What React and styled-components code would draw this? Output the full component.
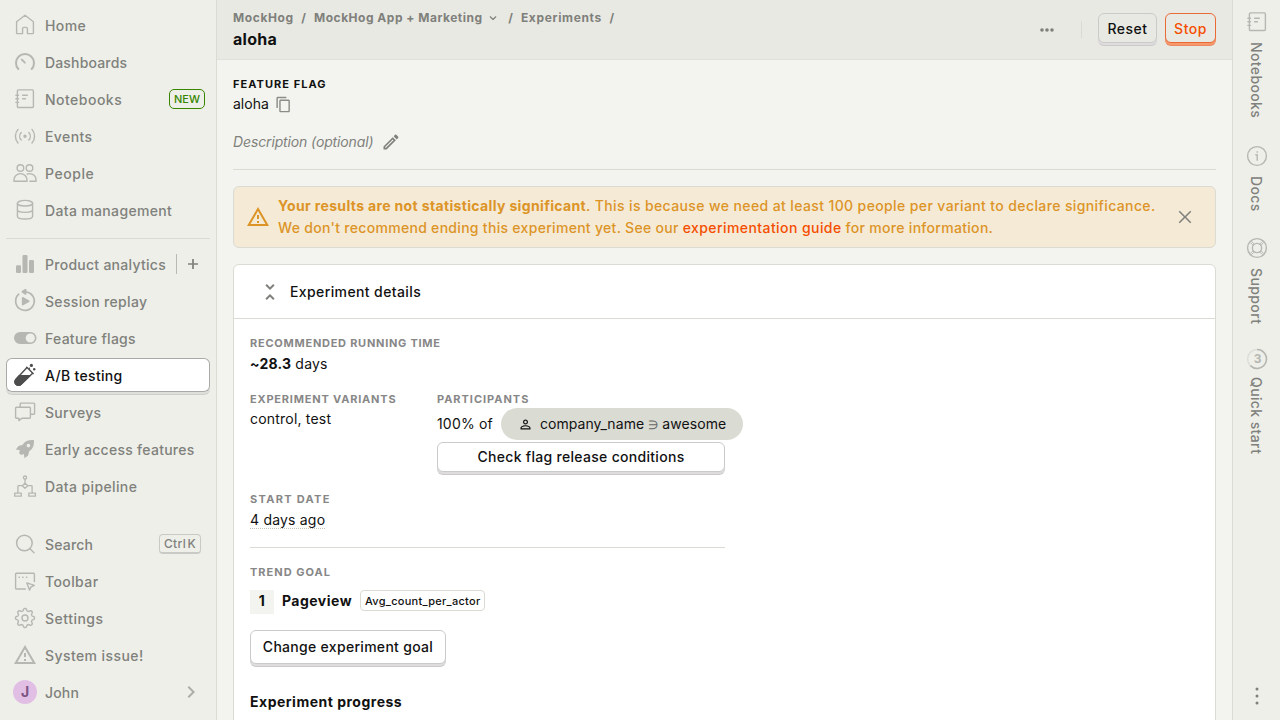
import React from "react";
import styled, { createGlobalStyle, css } from "styled-components";

const GlobalStyle = createGlobalStyle`
  * { box-sizing: border-box; }
  body {
    margin: 0;
    overflow: hidden;
    background: #f3f4ef;
    color: #111;
    font-family: Inter, "Liberation Sans", sans-serif;
    font-size: 14px;
    line-height: 20px;
  }
  svg { display: block; flex: none; }
`;

const Shell = styled.div`
  display: flex;
  height: 720px;
  width: 1280px;
  overflow: hidden;
`;

/* Left navigation */
const Sidebar = styled.nav`
  width: 217px;
  flex: none;
  display: flex;
  flex-direction: column;
  justify-content: space-between;
  padding: 8px 6px 11px;
  background: #eeefe9;
  border-right: 1px solid #dadbd2;
`;
const NavGroup = styled.ul`
  list-style: none;
  margin: 0;
  padding: 0;
  display: flex;
  flex-direction: column;
  gap: 3px;
`;
const NavDivider = styled.hr`
  border: 0;
  height: 1px;
  margin: 11px 0 8px;
  background: #dadbd2;
`;
const NavItem = styled.li`
  height: 34px;
  display: flex;
  align-items: center;
  gap: 8px;
  padding: 0 7px;
  border-radius: 6px;
  font-weight: 500;
  color: #80817c;
  ${(p) =>
    p.$active &&
    css`
      background: #fff;
      color: #111;
      box-shadow: inset 0 0 0 1px #a9a9a7, 0 2px 0 #dededb, 0 3px 0 #cfcfcc;
    `}
`;
const NavIcon = styled.span`
  width: 24px;
  height: 24px;
  color: ${(p) => (p.$active ? "#4d4d4d" : "#b6b7b2")};
`;
const NavLabel = styled.span`
  flex: 1;
  white-space: nowrap;
  padding-top: 1px;
  letter-spacing: ${(p) => p.$track || 0.27}px;
`;
const NewTag = styled.span`
  margin-right: -2px;
  height: 20px;
  padding: 0 4px;
  border: 1px solid #388600;
  border-radius: 5px;
  color: #388600;
  font-size: 11px;
  line-height: 18px;
`;
const AddAction = styled.span`
  display: flex;
  align-items: center;
  height: 20px;
  padding-left: 8px;
  margin-right: 2px;
  border-left: 1px solid #b9bab5;
  color: #80817c;
`;
const Shortcut = styled.kbd`
  height: 20px;
  margin-right: 2px;
  padding: 0 4px;
  border: 1px solid #c9cac6;
  border-bottom-width: 2px;
  border-radius: 4px;
  font: 500 12px/17px Inter, "Liberation Sans", sans-serif;
  letter-spacing: 0.35px;
  word-spacing: -2.2px;
`;
const Avatar = styled.span`
  display: flex;
  align-items: center;
  justify-content: center;
  width: 24px;
  height: 24px;
  border-radius: 50%;
  background: #e1bfe5;
  color: #7b5582;
  font-size: 14px;
  font-weight: 700;
`;

/* Centre */
const Main = styled.main`
  flex: 1;
  min-width: 0;
  display: flex;
  flex-direction: column;
`;
const TopBar = styled.header`
  height: 60px;
  flex: none;
  display: flex;
  justify-content: space-between;
  padding: 0 16px;
  background: #e8e9e3;
  border-bottom: 1px solid #e0e1da;
`;
const Breadcrumbs = styled.div`
  display: flex;
  align-items: center;
  margin-top: 9px;
  height: 17px;
  font-size: 12px;
  font-weight: 700;
  line-height: 17px;
  letter-spacing: 0.52px;
  color: #7f807b;
  svg { margin: 1px 2px 0 4px; }
`;
const Crumb = styled.span`
  white-space: nowrap;
  letter-spacing: ${(p) => p.$track || 0.55}px;
`;
const Slash = styled.span`
  margin: 0 7.6px;
`;
const PageTitle = styled.h1`
  margin: 1px 0 0;
  font-size: 16px;
  line-height: 24px;
  font-weight: 700;
  letter-spacing: 0.3px;
`;
const Actions = styled.div`
  display: flex;
  align-items: flex-start;
  padding-top: 13px;
`;
const MoreButton = styled.span`
  display: flex;
  margin: 5px 22px 0 0;
  color: #7f807b;
`;
const ActionDivider = styled.span`
  width: 1px;
  height: 17px;
  margin: 8px 16px 0 0;
  background: #d9dad2;
`;
const Button = styled.button`
  display: flex;
  align-items: center;
  justify-content: center;
  height: ${(p) => (p.$large ? 34 : 30)}px;
  width: ${(p) => p.$width || "auto"};
  padding: ${(p) => (p.$onBar ? "2px 0 0" : 0)};
  border: 1px solid ${(p) => (p.$danger ? "#ea6a35" : "#cbcacb")};
  border-radius: 6px;
  background: ${(p) => (p.$onBar ? "#e8e9e3" : "#fff")};
  box-shadow: ${(p) =>
    p.$danger
      ? "0 2px 0 #f6976c, 0 3px 0 #ea8a60"
      : "0 2px 0 #dfdcdd, 0 3px 0 #cbcacb"};
  color: ${(p) => (p.$danger ? "#f54e00" : "#111")};
  font: 500 14px/20px Inter, "Liberation Sans", sans-serif;
  letter-spacing: ${(p) => (p.$onBar ? 0.5 : 0.3)}px;
  & + & { margin-left: 8px; }
`;

const Content = styled.div`
  flex: 1;
  min-height: 0;
  overflow: hidden;
  padding: 16px 16px 0;
`;
const Label = styled.div`
  height: 16px;
  font-size: 11px;
  line-height: 16px;
  font-weight: 700;
  letter-spacing: ${(p) => p.$track || 0.8}px;
  text-transform: uppercase;
  white-space: nowrap;
  color: ${(p) => (p.$strong ? "#111" : "#878787")};
`;
const InlineRow = styled.div`
  display: flex;
  align-items: center;
  height: 20px;
  gap: ${(p) => p.$gap || 0}px;
  margin-top: ${(p) => p.$top || 0}px;
  color: ${(p) => (p.$muted ? "#80817c" : "#111")};
`;
const Placeholder = styled.i`
  color: #80817c;
  letter-spacing: -0.13px;
`;
const Rule = styled.hr`
  border: 0;
  height: 1px;
  margin: ${(p) => p.$margin};
  background: #dadbd2;
`;
const Banner = styled.div`
  display: flex;
  align-items: center;
  height: 62px;
  padding: 0 18px 0 12px;
  border: 1px solid #dadbd2;
  border-radius: 6px;
  background: #f4ead6;
  color: #dd9426;
  font-weight: 500;
  line-height: 22px;
`;
const BannerText = styled.div`
  flex: 1;
  margin-left: 8px;
  white-space: nowrap;
`;
const BannerLine = styled.p`
  margin: 0;
  letter-spacing: ${(p) => p.$track}px;
  strong { font-weight: 700; letter-spacing: 0.35px; }
  a { color: #f54e00; letter-spacing: 0.42px; }
`;
const CloseButton = styled.span`
  color: #80817c;
`;
const Card = styled.section`
  margin-top: 16px;
  height: 600px;
  border: 1px solid #dadbd2;
  border-radius: 6px;
  background: #fff;
`;
const CardHeader = styled.header`
  display: flex;
  align-items: center;
  gap: 8px;
  height: 54px;
  padding-left: 24px;
  border-bottom: 1px solid #dadbd2;
  font-weight: 500;
  letter-spacing: 0.39px;
  svg { color: #80817c; }
`;
const CardBody = styled.div`
  width: 507px;
  padding: 16px;
`;
const Value = styled.div`
  margin-top: ${(p) => p.$top}px;
  height: 20px;
  white-space: nowrap;
  letter-spacing: 0.2px;
`;
const Columns = styled.div`
  display: grid;
  grid-template-columns: 187px 288px;
  height: 84px;
  margin: 17px 0 16px;
`;
const PillRow = styled.div`
  display: flex;
  align-items: center;
  gap: 8px;
  height: 32px;
  margin: 1px 0 2px;
  white-space: nowrap;
  letter-spacing: 0.18px;
`;
const Pill = styled.span`
  flex: none;
  display: flex;
  align-items: center;
  gap: 7px;
  width: 242px;
  height: 32px;
  padding-left: 17px;
  border-radius: 16px;
  background: #dadbd3;
  letter-spacing: 0.07px;
`;
const Operator = styled.span`
  color: #666;
  font-size: 12px;
`;
const Dotted = styled.span`
  display: inline-block;
  line-height: 17px;
  border-bottom: 1px dotted #c2c3bb;
`;
const Series = styled.div`
  display: flex;
  align-items: flex-start;
  gap: 8px;
  height: 24px;
  margin: 10px 0 16px;
  font-weight: 700;
  line-height: 22px;
  letter-spacing: 0.48px;
`;
const SeriesIndex = styled.span`
  width: 24px;
  height: 24px;
  text-align: center;
  background: #f3f4ef;
`;
const MathTag = styled.span`
  height: 21px;
  padding: 0 4px;
  border: 1px solid #dadbd2;
  border-radius: 4px;
  font-size: 11px;
  font-weight: 500;
  line-height: 20px;
  letter-spacing: 0.27px;
`;
const Heading = styled.h4`
  margin: 27px 0 0;
  font-size: 14px;
  line-height: 22px;
  letter-spacing: 0.5px;
`;

/* Right rail */
const Rail = styled.aside`
  width: 48px;
  flex: none;
  display: flex;
  flex-direction: column;
  align-items: center;
  padding: 10px 0 12px;
  border-left: 1px solid #dadbd2;
  background: #eeefe9;
  color: #80817c;
`;
const RailItem = styled.div`
  width: 24px;
  height: ${(p) => p.$height}px;
  display: flex;
  flex-direction: column;
  align-items: center;
  gap: ${(p) => p.$gap || 8}px;
  svg { color: #b6b7b2; }
`;
const RailLabel = styled.span`
  writing-mode: vertical-rl;
  font-weight: 500;
  line-height: 20px;
  margin-right: 1px;
  letter-spacing: 0.38px;
  white-space: nowrap;
`;
const RailMore = styled.span`
  margin-top: auto;
`;

const Line = ({ children, w = 1.4, size = 24 }) => (
  <svg width={size} height={size} viewBox="0 0 24 24" fill="none" stroke="currentColor" strokeWidth={w} strokeLinejoin="round" strokeLinecap="round">
    {children}
  </svg>
);
const Solid = ({ d, size = 24, color = "currentColor" }) => (
  <svg width={size} height={size} viewBox="0 0 24 24" fill={color}>
    <path d={d} fillRule="evenodd" />
  </svg>
);

const HomeIcon = () => (
  <Line><path d="M12 2.3 3.6 8.8V19.9q0 .7.7.7h5.3v-5q0-1.2 1.2-1.2h2.4q1.2 0 1.2 1.2v5h5.3q.7 0 .7-.7V8.8Z" /></Line>
);
const GaugeIcon = () => (
  <Line w={2}><path d="M5.3 19a9 9 0 1 1 13.4 0M8.8 9.6l3 3" /></Line>
);
const NotebookIcon = () => (
  <Line>
    <rect x="4.4" y="2.9" width="16" height="17.6" rx="1" />
    <path d="M2.9 8.2h2.6M2.9 11.8h2.6M2.9 15.4h2.6M9.6 8.2h4.7M9.6 11.8h2.8" />
  </Line>
);
const LiveIcon = () => (
  <Line>
    <circle cx="12" cy="12.2" r="1" fill="currentColor" />
    <path d="M8.2 8.4a5.6 5.6 0 0 0 0 7.6M15.8 8.4a5.6 5.6 0 0 1 0 7.6M5 5.4a10.3 10.3 0 0 0 0 13.6M19 5.4a10.3 10.3 0 0 1 0 13.6" />
  </Line>
);
const PeopleIcon = () => (
  <Line>
    <circle cx="7.4" cy="7" r="3.3" />
    <circle cx="16.5" cy="7" r="3.3" />
    <path d="M1 20.3v-1.6a6.5 6.1 0 0 1 13 0v1.6ZM14.2 13.2q1.2-.6 2.3-.6a6.4 6.1 0 0 1 6.5 6.1v1.6h-6.1" />
  </Line>
);
const DatabaseIcon = () => (
  <Line>
    <ellipse cx="12" cy="5.2" rx="7.6" ry="2.8" />
    <path d="M4.4 5.2v13c0 1.6 3.4 2.8 7.6 2.8s7.6-1.2 7.6-2.8v-13M4.4 11.6c0 1.6 3.4 2.8 7.6 2.8s7.6-1.2 7.6-2.8" />
  </Line>
);
const BarsIcon = () => (
  <svg width="24" height="24" fill="currentColor">
    <rect x="3" y="13.2" width="5" height="7.8" rx="1.2" />
    <rect x="9.5" y="3" width="5" height="18" rx="1.2" />
    <rect x="16" y="8" width="5" height="13" rx="1.2" />
  </svg>
);
const ReplayIcon = () => (
  <Line w={1.7}>
    <path d="M12.5 2.8a9.3 9.3 0 1 1-6.8 2.4" />
    <path d="m9.4 2.8 3.2-2.2V5Z" fill="currentColor" />
    <path d="M9.7 8.8v6.8l6-3.4Z" fill="currentColor" />
  </Line>
);
const ToggleIcon = () => (
  <Solid d="M7 6h10.5a6 6 0 0 1 0 12H7A6 6 0 0 1 7 6Zm10.3 1.4a4.6 4.6 0 1 0 0 9.2 4.6 4.6 0 0 0 0-9.2Z" />
);
const TestTubeIcon = () => (
  <svg width="24" height="24" fill="none" stroke="currentColor" strokeWidth="1.4" strokeLinejoin="round">
    <path d="m14 4.6-11 11.6a3.6 3.6 0 0 0 5.1 5.1L19.6 10.2M13.3 3.7l7.3 7.4" />
    <path d="M6.2 12.7h10.5l-8.6 8.6A3.6 3.6 0 0 1 3 16.2Z" fill="currentColor" />
    <g fill="currentColor" stroke="none">
      <circle cx="18.4" cy="2.4" r="1.6" />
      <circle cx="21.2" cy="6.3" r="1.2" />
      <circle cx="16.4" cy="5.2" r=".8" />
    </g>
  </svg>
);
const SurveyIcon = () => (
  <Line>
    <path d="M7.2 7V4q0-.9.9-.9h12.6q.9 0 .9.9v9.3q0 .9-.9.9H17.6" />
    <path d="M3.5 7.2h13q.9 0 .9.9v9.2q0 .9-.9.9H9L5.9 20.6V18.2H3.5q-.9 0-.9-.9V8.1q0-.9.9-.9Z" />
  </Line>
);
const RocketIcon = () => (
  <Solid d="M20.9 3.1C15.8 2.7 12 4 9.7 7.8L5.6 8.9 2.8 12.5l4.2.7c-.4 1-.8 1.8-1 2.8l2 2c1-.2 1.8-.6 2.8-1l.7 4.3 3.6-2.9 1.1-4.1c3.8-2.3 5.1-6.1 4.7-11.2ZM15.4 6.8a1.8 1.8 0 1 1 0 3.6 1.8 1.8 0 0 1 0-3.6Z" />
);
const PipelineIcon = () => (
  <Line w={1.3}>
    <circle cx="12" cy="3.6" r="1.6" />
    <path d="M12 5.3v4M12 9.2l2.8 2.5L12 14.2l-2.8-2.5ZM9.2 11.7H5.6q-.7 0-.7.7v6.8M14.8 11.7h3.6q.7 0 .7.7v6.8M1.7 19.2h6.6v3H1.7ZM15.8 19.2h6.6v3h-6.6Z" />
  </Line>
);
const SearchIcon = () => (
  <Line w={1.5}><circle cx="11.4" cy="11" r="7.8" /><path d="m17 16.7 4 4" /></Line>
);
const ToolbarIcon = () => (
  <Line>
    <path d="M12.4 20H3.5q-.9 0-.9-.9V5.2q0-.9.9-.9h17q.9 0 .9.9v7.4" />
    <path d="M6 8.3h.4M9.7 8.3h.4M13.4 8.3h.4" />
    <path d="m13.9 13.9 7.4 2.5-3.3 1.5-1.5 3.2Z" />
  </Line>
);
const gear = Array.from({ length: 97 }, (_, i) => {
  const a = (i / 96) * Math.PI * 2;
  const r = 8.4 + 1.1 * Math.tanh(2.2 * Math.cos(8 * a));
  return `${i ? "L" : "M"}${(12 + r * Math.sin(a)).toFixed(2)} ${(12 - r * Math.cos(a)).toFixed(2)}`;
}).join("");
const GearIcon = () => (
  <Line><path d={gear} /><circle cx="12" cy="12" r="3" /></Line>
);
const WarningIcon = () => (
  <Solid d="M12 5.99 19.53 19H4.47L12 5.99M12 2 1 21h22L12 2zm1 14h-2v2h2v-2zm0-6h-2v4h2v-4z" />
);
const ChevronRight = () => (
  <Solid color="#adaeaa" d="M10 6 8.59 7.41 13.17 12l-4.58 4.59L10 18l6-6z" />
);
const InfoIcon = () => (
  <Line>
    <circle cx="12" cy="12" r="9.4" />
    <path d="M10.8 10.8h1.4v5.4M12.2 7.8v.4" />
  </Line>
);
const SupportIcon = () => (
  <Line>
    <circle cx="12" cy="12" r="9.4" />
    <circle cx="12" cy="12" r="4.6" />
    <path d="m5.4 6.6 3 3M6.6 5.4l3 3M18.6 6.6l-3 3M17.4 5.4l-3 3M5.4 17.4l3-3M6.6 18.6l3-3M18.6 17.4l-3-3M17.4 18.6l-3-3" strokeWidth="1" />
  </Line>
);
const ProgressIcon = () => (
  <svg width="24" height="24" fill="none" strokeWidth="1.5">
    <circle cx="12" cy="12" r="9.4" stroke="#dddeda" />
    <path d="M12 2.6a9.4 9.4 0 1 1-6.6 16" stroke="currentColor" />
    <text x="12.6" y="16.4" textAnchor="middle" fontSize="12" fontWeight="700" fill="currentColor">3</text>
  </svg>
);

const primary = [
  { label: "Home", Icon: HomeIcon, track: 0.4 },
  { label: "Dashboards", Icon: GaugeIcon, track: 0.16 },
  { label: "Notebooks", Icon: NotebookIcon, track: 0.48, extra: <NewTag>NEW</NewTag> },
  { label: "Events", Icon: LiveIcon, track: 0.4 },
  { label: "People", Icon: PeopleIcon, track: 0.55 },
  { label: "Data management", Icon: DatabaseIcon, track: 0.34 },
];
const products = [
  {
    label: "Product analytics",
    Icon: BarsIcon,
    extra: (
      <AddAction>
        <Line size={16} w={2.6}><path d="M12 4.5v15M4.5 12h15" strokeLinecap="butt" /></Line>
      </AddAction>
    ),
  },
  { label: "Session replay", Icon: ReplayIcon, track: 0.32 },
  { label: "Feature flags", Icon: ToggleIcon },
  { label: "A/B testing", Icon: TestTubeIcon, active: true, track: 0.32 },
  { label: "Surveys", Icon: SurveyIcon },
  { label: "Early access features", Icon: RocketIcon },
  { label: "Data pipeline", Icon: PipelineIcon, track: 0.38 },
];
const utilities = [
  { label: "Search", Icon: SearchIcon, track: 0.18, extra: <Shortcut>Ctrl K</Shortcut> },
  { label: "Toolbar", Icon: ToolbarIcon, track: 0.4 },
  { label: "Settings", Icon: GearIcon, track: 0.5 },
  { label: "System issue!", Icon: WarningIcon, track: 0.42 },
];

const NavList = ({ items, children }) => (
  <NavGroup>
    {items.map(({ label, Icon, extra, active, track }) => (
      <NavItem key={label} $active={active}>
        <NavIcon $active={active}><Icon /></NavIcon>
        <NavLabel $track={track}>{label}</NavLabel>
        {extra}
      </NavItem>
    ))}
    {children}
  </NavGroup>
);

export default function App() {
  return (
    <Shell>
      <GlobalStyle />
      <Sidebar>
        <div>
          <NavList items={primary} />
          <NavDivider />
          <NavList items={products} />
        </div>
        <NavList items={utilities}>
          <NavItem>
            <Avatar>J</Avatar>
            <NavLabel $track={0.15}>John</NavLabel>
            <ChevronRight />
          </NavItem>
        </NavList>
      </Sidebar>

      <Main>
        <TopBar>
          <div>
            <Breadcrumbs>
              <Crumb $track={0.6}>MockHog</Crumb><Slash>/</Slash>
              <Crumb $track={0.5}>MockHog App + Marketing</Crumb>
              <Line size={12} w={2.2}><path d="m6.5 9.5 5.5 5.5 5.5-5.5" /></Line>
              <Slash>/</Slash>
              <Crumb $track={0.66}>Experiments</Crumb><Slash>/</Slash>
            </Breadcrumbs>
            <PageTitle>aloha</PageTitle>
          </div>
          <Actions>
            <MoreButton>
              <Solid size={24} d="M7 10.2a1.8 1.8 0 1 0 0 3.6 1.8 1.8 0 0 0 0-3.6Zm5 0a1.8 1.8 0 1 0 0 3.6 1.8 1.8 0 0 0 0-3.6Zm5 0a1.8 1.8 0 1 0 0 3.6 1.8 1.8 0 0 0 0-3.6Z" />
            </MoreButton>
            <ActionDivider />
            <Button $onBar $width="59px">Reset</Button>
            <Button $onBar $danger $width="51px">Stop</Button>
          </Actions>
        </TopBar>

        <Content>
          <Label $strong $track={1.05}>Feature flag</Label>
          <InlineRow $top={2} $gap={6}>
            aloha
            <Solid size={17} color="#8b8c87" d="M16 1H4c-1.1 0-2 .9-2 2v14h2V3h12V1zm3 4H8c-1.1 0-2 .9-2 2v14c0 1.1.9 2 2 2h11c1.1 0 2-.9 2-2V7c0-1.1-.9-2-2-2zm0 16H8V7h11v14z" />
          </InlineRow>
          <InlineRow $top={18} $gap={8} $muted>
            <Placeholder>Description (optional)</Placeholder>
            <Solid size={20} d="M14.06 9.02l.92.92L5.92 19H5v-.92l9.06-9.06M17.66 3c-.25 0-.51.1-.7.29l-1.83 1.83 3.75 3.75 1.83-1.83c.39-.39.39-1.02 0-1.41l-2.34-2.34c-.2-.2-.45-.29-.71-.29zm-3.6 3.19L3 17.25V21h3.75L17.81 9.94l-3.75-3.75z" />
          </InlineRow>
          <Rule $margin="17px 0 16px" />
          <Banner>
            <WarningIcon />
            <BannerText>
              <BannerLine $track={0.385}>
                <strong>Your results are not statistically significant</strong>. This is because we need at least 100 people per variant to declare significance.
              </BannerLine>
              <BannerLine $track={0.3}>
                We don't recommend ending this experiment yet. See our <a>experimentation guide</a> for more information.
              </BannerLine>
            </BannerText>
            <CloseButton>
              <Solid size={24} d="M18.3 6.8 17.2 5.7 12 10.9 6.8 5.7 5.7 6.8 10.9 12 5.7 17.2l1.1 1.1L12 13.1l5.2 5.2 1.1-1.1L13.1 12Z" />
            </CloseButton>
          </Banner>

          <Card>
            <CardHeader>
              <Solid d="M7.41 18.59 8.83 20 12 16.83 15.17 20l1.41-1.41L12 14l-4.59 4.59zm9.18-13.18L15.17 4 12 7.17 8.83 4 7.41 5.41 12 10l4.59-4.59z" />
              Experiment details
            </CardHeader>
            <CardBody>
              <Label $track={0.74}>Recommended running time</Label>
              <Value $top={3}><b>~28.3</b> days</Value>
              <Columns>
                <div>
                  <Label>Experiment variants</Label>
                  <Value $top={2}>control, test</Value>
                </div>
                <div>
                  <Label $track={0.97}>Participants</Label>
                  <PillRow>
                    100% of
                    <Pill>
                      <Solid size={15} d="M12 5.9c1.16 0 2.1.94 2.1 2.1s-.94 2.1-2.1 2.1S9.9 9.16 9.9 8s.94-2.1 2.1-2.1m0 9c2.97 0 6.1 1.46 6.1 2.1v1.1H5.9V17c0-.64 3.13-2.1 6.1-2.1M12 4C9.79 4 8 5.79 8 8s1.79 4 4 4 4-1.79 4-4-1.79-4-4-4zm0 9c-2.67 0-8 1.34-8 4v3h16v-3c0-2.66-5.33-4-8-4z" />
                      <span>company_name <Operator>∋</Operator> awesome</span>
                    </Pill>
                  </PillRow>
                  <Button $width="288px">Check flag release conditions</Button>
                </div>
              </Columns>
              <Label $track={1.3}>Start date</Label>
              <Value $top={3}><Dotted>4 days ago</Dotted></Value>
              <Rule $margin="17px 0 16px" />
              <Label $track={1}>Trend goal</Label>
              <Series>
                <SeriesIndex>1</SeriesIndex>
                Pageview
                <MathTag>Avg_count_per_actor</MathTag>
              </Series>
              <Button $large $width="196px">Change experiment goal</Button>
              <Heading>Experiment progress</Heading>
            </CardBody>
          </Card>
        </Content>
      </Main>

      <Rail>
        <RailItem $height={134}><NotebookIcon /><RailLabel>Notebooks</RailLabel></RailItem>
        <RailItem $height={92}><InfoIcon /><RailLabel>Docs</RailLabel></RailItem>
        <RailItem $height={111}><SupportIcon /><RailLabel>Support</RailLabel></RailItem>
        <RailItem $height={130} $gap={6}><ProgressIcon /><RailLabel>Quick start</RailLabel></RailItem>
        <RailMore>
          <Solid size={24} d="M12 3.6a1.5 1.5 0 1 0 0 3 1.5 1.5 0 0 0 0-3Zm0 6.9a1.5 1.5 0 1 0 0 3 1.5 1.5 0 0 0 0-3Zm0 6.9a1.5 1.5 0 1 0 0 3 1.5 1.5 0 0 0 0-3Z" />
        </RailMore>
      </Rail>
    </Shell>
  );
}
